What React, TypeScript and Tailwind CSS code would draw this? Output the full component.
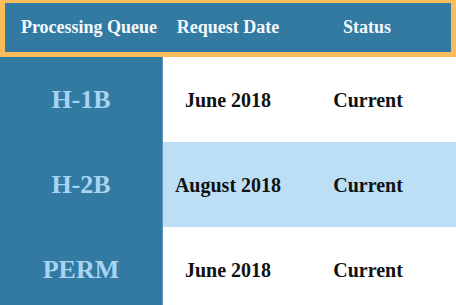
import React from "react";

const rows = [
  { q: "H-1B", d: "June 2018", s: "Current", bg: "bg-white" },
  { q: "H-2B", d: "August 2018", s: "Current", bg: "bg-[#bcdff6]" },
  { q: "PERM", d: "June 2018", s: "Current", bg: "bg-white" },
];

export default function App() {
  return (
    <div
      className="w-[456px] h-[305px] overflow-hidden bg-white flex flex-col"
      style={{ fontFamily: '"Liberation Serif", "DejaVu Serif", serif' }}
    >
      <div className="h-[57px] shrink-0 border-x-[5px] border-t-[3px] border-b-[5px] border-[#fbbd5b] bg-[#337aa3] grid grid-cols-[168px_110px_1fr] items-center text-[18px] font-bold text-[#f4f8fb]">
        <div className="text-center">Processing Queue</div>
        <div className="text-center">Request Date</div>
        <div className="text-center">Status</div>
      </div>
      {rows.map((r, i) => (
        <div key={i} className="h-[85px] shrink-0 grid grid-cols-[163px_130px_150px_1fr]">
          <div className="bg-[#337aa3] border-r border-[#5c98bd] flex items-center justify-center text-[26px] font-bold text-[#a8d4f1]">
            {r.q}
          </div>
          <div className={`${r.bg} col-span-3 grid grid-cols-[130px_150px_1fr] items-center text-[20px] font-bold text-[#111]`}>
            <div className="text-center">{r.d}</div>
            <div className="text-center">{r.s}</div>
            <div />
          </div>
        </div>
      ))}
    </div>
  );
}
